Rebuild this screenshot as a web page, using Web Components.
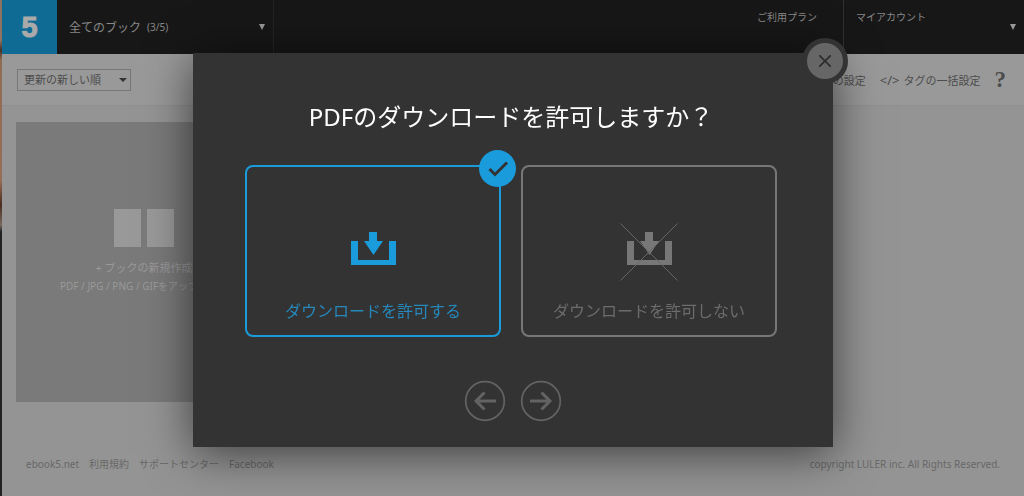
<!DOCTYPE html>
<html lang="ja">
<head>
<meta charset="utf-8">
<meta name="viewport" content="width=device-width, initial-scale=1">
<title>ebook5</title>
<style>
  body {
    margin: 0;
    font-family: "Noto Sans", "Noto Sans CJK JP", sans-serif;
    background: #949494;
  }
</style>
</head>
<body>
<book-app></book-app>

<template id="book-app">
  <style>
    :host {
      display: flex;
      flex-direction: column;
      min-height: 100vh;
      box-sizing: border-box;
      padding-left: 2px;
      background: linear-gradient(#8b735f, #91745f 40px, #46332a 50px, #8f6d54 60px, #976e55 180px, #4b2d20 205px, #77685f 225px, #222 232px) left / 2px 100% no-repeat;
    }
    main {
      flex: 1;
      padding: 16px 14px;
      background: #949494;
    }
  </style>
  <app-header></app-header>
  <tool-bar></tool-bar>
  <main>
    <new-book>
      + ブックの新規作成
      <span slot="note">PDF / JPG / PNG / GIFをアップロード</span>
    </new-book>
  </main>
  <app-footer></app-footer>
  <step-dialog>
    <span slot="title">PDFのダウンロードを許可しますか？</span>
    <choice-card selected>ダウンロードを許可する</choice-card>
    <choice-card denied>ダウンロードを許可しない</choice-card>
    <round-button slot="nav" direction="back"></round-button>
    <round-button slot="nav" direction="next"></round-button>
  </step-dialog>
</template>

<template id="app-header">
  <style>
    :host {
      display: flex;
      height: 54px;
      background: #171717;
      color: #888;
    }
    a, button {
      font: inherit;
      color: inherit;
      text-decoration: none;
      background: none;
      border: 0;
      box-sizing: border-box;
    }
    .logo {
      display: grid;
      place-items: center;
      width: 55px;
      background: #0f6b94;
      color: #aaa;
      font: 700 29px/1 "Liberation Sans", sans-serif;
      -webkit-text-stroke: 1px #aaa;
    }
    .books {
      display: flex;
      align-items: center;
      gap: 6px;
      width: 217px;
      padding: 0 8px 0 12px;
      border-right: 1px solid #242424;
      font-size: 12px;
    }
    small {
      flex: 1;
      font-size: 10px;
      text-align: left;
    }
    .menu {
      display: flex;
      margin-left: auto;
      font-size: 10px;
      line-height: 14px;
    }
    .plan {
      padding: 10px 26px 0 12px;
    }
    .account {
      display: flex;
      justify-content: space-between;
      width: 181px;
      padding: 10px 8px 0 12px;
      border-left: 1px solid #303030;
      line-height: 14px;
    }
    .account svg {
      margin-top: 14px;
    }
  </style>
  <a class="logo" href="#">5</a>
  <button class="books">
    全てのブック <small>(3/5)</small>
    <svg width="6" height="6" viewBox="0 0 6 6"><path d="M0 0h6L3 6z" fill="#999"/></svg>
  </button>
  <nav class="menu">
    <a class="plan" href="#">ご利用プラン</a>
    <button class="account">
      マイアカウント
      <svg width="6" height="6" viewBox="0 0 6 6"><path d="M0 0h6L3 6z" fill="#999"/></svg>
    </button>
  </nav>
</template>

<template id="tool-bar">
  <style>
    :host {
      display: flex;
      align-items: center;
      box-sizing: border-box;
      height: 52px;
      padding: 0 18px 0 15px;
      background: #999;
      border-bottom: 1px solid #8f8f8f;
      color: #4c4c4c;
      font-size: 11px;
    }
    .sort {
      display: grid;
      align-items: center;
    }
    .sort > * {
      grid-area: 1 / 1;
    }
    .sort svg {
      justify-self: end;
      margin-right: 4px;
      pointer-events: none;
    }
    select {
      appearance: none;
      width: 114px;
      height: 22px;
      padding: 0 6px;
      border: 1px solid #777;
      border-radius: 0;
      background: none;
      color: inherit;
      font: inherit;
    }
    nav {
      display: flex;
      align-items: center;
      gap: 14px;
      margin-left: auto;
    }
    a {
      color: inherit;
      text-decoration: none;
    }
    .tag {
      display: flex;
      align-items: center;
      gap: 4px;
    }
    .code {
      font-size: 13px;
      line-height: 16px;
    }
    .help {
      font: 700 23px/24px "Liberation Serif", serif;
    }
  </style>
  <div class="sort">
    <select aria-label="並び順"><option>更新の新しい順</option></select>
    <svg width="8" height="4" viewBox="0 0 8 4"><path d="M0 0h8L4 4z" fill="#333"/></svg>
  </div>
  <nav>
    <a href="#">の設定</a>
    <a class="tag" href="#"><span class="code">&lt;/&gt;</span> タグの一括設定</a>
    <a class="help" href="#">?</a>
  </nav>
</template>

<template id="new-book">
  <style>
    :host {
      display: block;
      width: 256px;
    }
    button {
      display: flex;
      flex-direction: column;
      align-items: center;
      justify-content: center;
      width: 100%;
      height: 280px;
      padding: 0 0 20px;
      border: 0;
      background: #7a7a7a;
      color: #999;
      font: 11px/18px "Noto Sans", "Noto Sans CJK JP", sans-serif;
      white-space: nowrap;
    }
    .pages {
      display: flex;
      gap: 6px;
      margin-bottom: 12px;
    }
    .pages i {
      width: 27px;
      height: 38px;
      background: #999;
    }
    ::slotted(span) {
      font-size: 10px;
    }
  </style>
  <button>
    <span class="pages"><i></i><i></i></span>
    <span><slot></slot></span>
    <slot name="note"></slot>
  </button>
</template>

<template id="app-footer">
  <style>
    :host {
      display: flex;
      justify-content: space-between;
      padding: 0 24px 24px;
      background: #949494;
      color: #686868;
      font-size: 10px;
      line-height: 16px;
    }
    nav {
      display: flex;
      gap: 10px;
    }
    a {
      color: inherit;
      text-decoration: none;
    }
  </style>
  <nav>
    <a href="#">ebook5.net</a>
    <a href="#">利用規約</a>
    <a href="#">サポートセンター</a>
    <a href="#">Facebook</a>
  </nav>
  <span>copyright LULER inc. All Rights Reserved.</span>
</template>

<template id="step-dialog">
  <style>
    :host {
      position: fixed;
      inset: 4px 0 0 2px;
      display: grid;
      place-items: center;
    }
    section {
      position: relative;
      display: flex;
      flex-direction: column;
      box-sizing: border-box;
      width: 640px;
      max-width: 90%;
      padding: 48px 56px 25px 52px;
      background: #333;
      box-shadow: 0 6px 44px rgba(0, 0, 0, 0.6);
      color: #fff;
    }
    h1 {
      margin: 0 0 32px;
      font-size: 24px;
      line-height: 32px;
      font-weight: 400;
      text-align: center;
    }
    .choices {
      display: grid;
      grid-template-columns: 1fr 1fr;
      gap: 20px;
    }
    .nav {
      display: flex;
      justify-content: center;
      gap: 14px;
      margin-top: 43px;
      padding-left: 4px;
    }
    .close {
      position: absolute;
      top: -15px;
      right: -15px;
      display: grid;
      place-items: center;
      width: 46px;
      height: 46px;
      padding: 0;
      border: 5px solid #333;
      border-radius: 50%;
      background: #666;
    }
  </style>
  <section role="dialog" aria-labelledby="title">
    <button class="close" aria-label="閉じる">
      <svg width="12" height="12" viewBox="0 0 12 12"><path d="M0 0l12 12M12 0L0 12" stroke="#2c2c2c" stroke-width="1.6"/></svg>
    </button>
    <h1 id="title"><slot name="title"></slot></h1>
    <div class="choices"><slot></slot></div>
    <div class="nav"><slot name="nav"></slot></div>
  </section>
</template>

<template id="choice-card">
  <style>
    :host {
      position: relative;
      display: block;
      --tone: #777;
      --label: #6c6c6c;
    }
    :host([selected]) {
      --tone: #1a9cdc;
      --label: #2688bb;
    }
    button {
      display: flex;
      flex-direction: column;
      align-items: center;
      justify-content: flex-end;
      gap: 18px;
      width: 100%;
      height: 172px;
      padding: 0 0 12px;
      border: 2px solid var(--tone);
      border-radius: 8px;
      background: none;
      color: var(--label);
      font: 16px/24px "Noto Sans", "Noto Sans CJK JP", sans-serif;
    }
    .cross, .check {
      display: none;
    }
    :host([denied]) .cross {
      display: block;
    }
    :host([selected]) .check {
      display: block;
      position: absolute;
      top: -15px;
      right: -15px;
    }
  </style>
  <button>
    <svg width="58" height="58" viewBox="0 0 58 58">
      <path d="M7 18h7v19h31V18h7v24H7z" fill="var(--tone)"/>
      <path d="M25 9h8v9h6L29.500 32 20 18h5z" fill="var(--tone)"/>
      <path class="cross" d="M.5.5l57 57M57.500.5L.5 57.500" stroke="#686868" stroke-width="1"/>
    </svg>
    <span><slot></slot></span>
  </button>
  <svg class="check" width="37" height="37" viewBox="0 0 37 37">
    <circle cx="18.500" cy="18.500" r="18.500" fill="#1a9cdc"/>
    <path d="M10.500 19l5.500 5.500L28 12.500" fill="none" stroke="#333" stroke-width="3"/>
  </svg>
</template>

<template id="round-button">
  <style>
    :host {
      display: block;
    }
    :host([direction="next"]) svg {
      transform: scaleX(-1);
    }
    button {
      display: grid;
      place-items: center;
      width: 42px;
      height: 42px;
      padding: 0;
      border: 0;
      background: none;
    }
  </style>
  <button>
    <svg width="42" height="42" viewBox="0 0 42 42" fill="none" stroke="#636363">
      <circle cx="21" cy="21" r="19.300" stroke-width="1.700"/>
      <path d="M32 21H12M20.500 12.500L12 21l8.500 8.500" stroke-width="3"/>
    </svg>
  </button>
</template>

<script>
  class TemplateElement extends HTMLElement {
    constructor () {
      super()
      const template = document.getElementById(this.localName)
      this.attachShadow({ mode: 'open' }).appendChild(template.content.cloneNode(true))
    }
  }

  customElements.define('app-header', class extends TemplateElement {})
  customElements.define('tool-bar', class extends TemplateElement {})
  customElements.define('new-book', class extends TemplateElement {})
  customElements.define('app-footer', class extends TemplateElement {})

  customElements.define('choice-card', class extends TemplateElement {
    #button = this.shadowRoot.querySelector('button')

    static observedAttributes = ['selected']

    attributeChangedCallback () {
      this.#button.setAttribute('aria-pressed', this.hasAttribute('selected'))
    }
  })

  customElements.define('round-button', class extends TemplateElement {
    connectedCallback () {
      const label = this.getAttribute('direction') === 'next' ? '次へ' : '戻る'
      this.shadowRoot.querySelector('button').setAttribute('aria-label', label)
    }
  })

  customElements.define('step-dialog', class extends TemplateElement {
    connectedCallback () {
      const cards = this.querySelectorAll('choice-card')

      cards.forEach((card) => {
        card.addEventListener('click', () => {
          cards.forEach((other) => other.toggleAttribute('selected', other === card))
        })
      })

      this.shadowRoot.querySelector('.close').addEventListener('click', () => this.remove())
    }
  })

  customElements.define('book-app', class extends TemplateElement {})
</script>
</body>
</html>
